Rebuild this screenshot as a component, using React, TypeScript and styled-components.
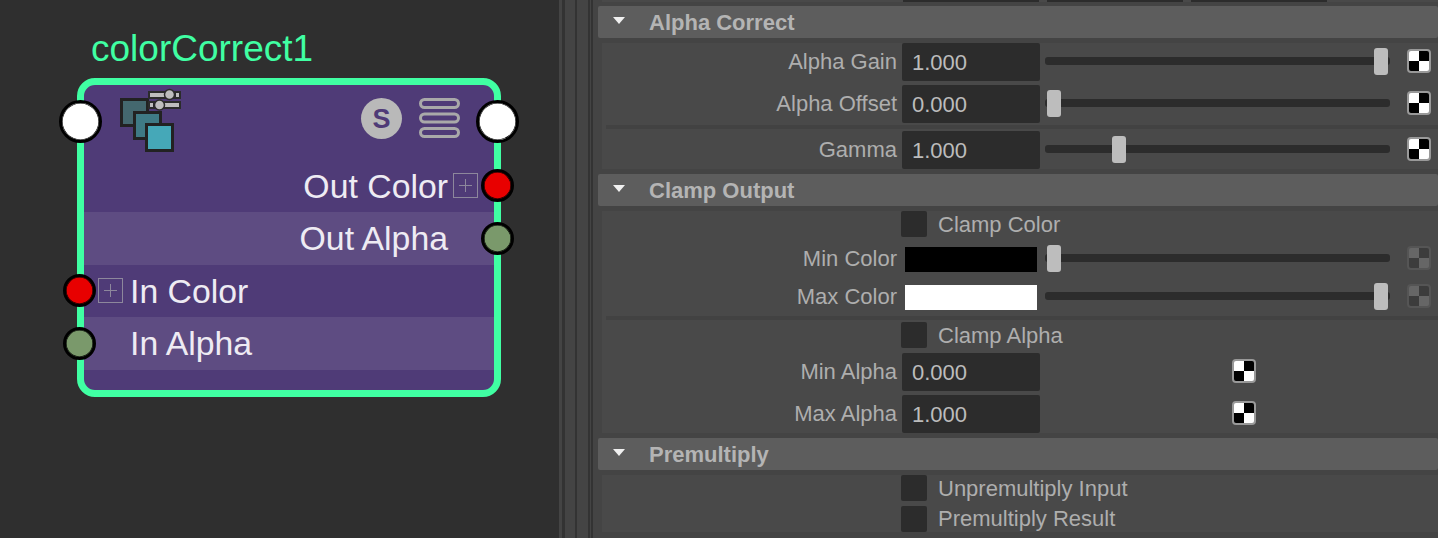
import React from 'react';
import styled, { createGlobalStyle } from 'styled-components';

const GlobalStyle = createGlobalStyle`
  html, body {
    margin: 0;
    height: 100%;
    overflow: hidden;
    background: #2f2f2f;
    font-family: "Liberation Sans", Arial, sans-serif;
  }
`;

const colors = {
  mint: '#40ffa3',
  plum: '#4f3b77',
  plumLight: '#5e4c82',
  pane: '#2f2f2f',
  panel: '#444444',
  body: '#494949',
  header: '#5d5d5d',
  field: '#2c2c2c',
  label: '#aeaeae',
};

const Screen = styled.div`
  display: flex;
  width: 1438px;
  height: 538px;
  overflow: hidden;
`;

const Canvas = styled.div`
  position: relative;
  flex: 0 0 559px;
  background: ${colors.pane};
`;

const Node = styled.div`
  position: absolute;
  left: 77px;
  top: 78px;
  width: 424px;
  height: 319px;
  box-sizing: border-box;
  border: 7px solid ${colors.mint};
  border-radius: 18px;
  background: ${colors.plum};
`;

const NodeTitle = styled.div`
  position: absolute;
  left: 7px;
  top: -57px;
  font-size: 37px;
  line-height: 42px;
  color: ${colors.mint};
  white-space: nowrap;
`;

const NodeHeader = styled.div`
  display: flex;
  justify-content: space-between;
  height: 75px;
  padding: 6px 34px 0 36px;
  box-sizing: border-box;
`;

const NodeTools = styled.div`
  display: flex;
  gap: 17px;
  margin-top: 7px;
`;

const SwatchBadge = styled.span`
  display: flex;
  align-items: center;
  justify-content: center;
  width: 41px;
  height: 41px;
  padding-top: 1px;
  box-sizing: border-box;
  border-radius: 50%;
  background: #b9b9b9;
  color: ${colors.plum};
  font-size: 27px;
  font-weight: 700;
`;

const NodeRow = styled.div<{ $alt?: boolean; $out?: boolean }>`
  position: relative;
  display: flex;
  align-items: center;
  justify-content: ${(p) => (p.$out ? 'flex-end' : 'flex-start')};
  height: ${(p) => (p.$alt ? 53 : 52)}px;
  padding: ${(p) => (p.$out ? '0 46px 0 0' : '0 0 0 46px')};
  box-sizing: border-box;
  background: ${(p) => (p.$alt ? colors.plumLight : 'transparent')};
  color: #eeebf3;
  font-size: 33.8px;
  white-space: nowrap;
`;

const PlusBox = styled.span<{ $out?: boolean }>`
  position: absolute;
  top: 13px;
  ${(p) => (p.$out ? 'right: 16px;' : 'left: 14px;')}
  width: 25px;
  height: 25px;
  box-sizing: border-box;
  border: 1px solid #8d879c;

  &::before,
  &::after {
    content: '';
    position: absolute;
    background: #8d879c;
  }
  &::before {
    left: 5px;
    right: 5px;
    top: 11px;
    height: 1px;
  }
  &::after {
    top: 5px;
    bottom: 5px;
    left: 11px;
    width: 1px;
  }
`;

const Port = styled.span<{ $x: number; $y: number; $size: number; $color: string }>`
  position: absolute;
  left: ${(p) => p.$x}px;
  top: ${(p) => p.$y}px;
  width: ${(p) => p.$size}px;
  height: ${(p) => p.$size}px;
  box-sizing: border-box;
  border: 3px solid #000;
  box-shadow: inset 0 0 0 0.6px #000;
  border-radius: 50%;
  background: ${(p) => p.$color};
`;

const Gutter = styled.div`
  display: flex;
  flex: 0 0 34px;
`;

const Strip = styled.div<{ $w: number; $dark?: boolean }>`
  flex: 0 0 ${(p) => p.$w}px;
  background: ${(p) => (p.$dark ? '#333333' : colors.panel)};
`;

const Panel = styled.div`
  flex: 1;
  padding-left: 5px;
  background: ${colors.panel};
  color: ${colors.label};
  font-size: 22px;
`;

const ClippedRow = styled.div`
  display: flex;
  gap: 8px;
  height: 2px;
  margin: 0 0 4px 4px;
  padding-left: 301px;
  background: ${colors.body};
`;

const ClippedField = styled.div`
  width: 136px;
  background: ${colors.field};
`;

const SectionHeader = styled.div`
  display: flex;
  align-items: center;
  height: 32px;
  padding-left: 15px;
  border-radius: 2px;
  background: ${colors.header};
  font-weight: 700;
  color: #b4b4b4;
`;

const SectionTitle = styled.span`
  margin-top: 2px;
`;

const Caret = styled.span`
  width: 0;
  height: 0;
  margin: -4px 24px 0 0;
  border-left: 6.5px solid transparent;
  border-right: 6.5px solid transparent;
  border-top: 7px solid #f0f0f0;
`;

const SectionBody = styled.div`
  display: flex;
  flex-direction: column;
  margin: 5px 0 5px 4px;
  background: ${colors.body};
`;

const Row = styled.div<{ $height?: number; $gap?: number }>`
  display: flex;
  align-items: center;
  height: ${(p) => p.$height ?? 38}px;
  margin-bottom: ${(p) => p.$gap ?? 0}px;
`;

const Label = styled.span`
  flex: 0 0 295px;
  margin-right: 5px;
  text-align: right;
  white-space: nowrap;
`;

const Field = styled.div`
  flex: 0 0 138px;
  height: 38px;
  margin-right: 5px;
  padding-left: 10px;
  box-sizing: border-box;
  border-radius: 2px;
  background: ${colors.field};
  color: #bcbcbc;
  line-height: 40px;
`;

const ColorWell = styled.div<{ $color: string }>`
  flex: 0 0 132px;
  height: 25px;
  margin: 0 8px 0 3px;
  background: ${(p) => p.$color};
`;

const Track = styled.div`
  position: relative;
  flex: 0 0 345px;
  height: 8px;
  margin: -2px 17px 0 0;
  border-radius: 3px;
  background: ${colors.field};
`;

const Thumb = styled.span<{ $left: number }>`
  position: absolute;
  left: ${(p) => p.$left}px;
  top: -9px;
  width: 14px;
  height: 27px;
  border-radius: 3px;
  background: #bdbdbd;
`;

const Checker = styled.span<{ $off?: boolean; $indent?: number }>`
  flex: 0 0 24px;
  height: 24px;
  margin: -2px 0 0 ${(p) => p.$indent ?? 0}px;
  box-sizing: border-box;
  border: 2px solid ${(p) => (p.$off ? '#555555' : '#999999')};
  border-radius: 4px;
  background: ${(p) =>
    p.$off
      ? 'conic-gradient(#3c3c3c 25%, #666666 0 50%, #3c3c3c 0 75%, #666666 0)'
      : 'conic-gradient(#000000 25%, #ffffff 0 50%, #000000 0 75%, #ffffff 0)'};
`;

const CheckRow = styled.div<{ $gap?: number }>`
  display: flex;
  align-items: center;
  height: 26px;
  padding-left: 299px;
  margin-bottom: ${(p) => p.$gap ?? 0}px;
`;

const CheckBox = styled.span`
  flex: 0 0 26px;
  height: 26px;
  margin-right: 11px;
  border-radius: 2px;
  background: ${colors.field};
`;

const CheckText = styled.span<{ $raised?: boolean }>`
  margin-top: ${(p) => (p.$raised ? 0 : 2)}px;
  white-space: nowrap;
`;

const Divider = styled.div<{ $above: number; $below: number }>`
  height: 4px;
  margin: ${(p) => p.$above}px 0 ${(p) => p.$below}px 4px;
  background: #424242;
`;

function NodeIcon(): React.JSX.Element {
  return (
    <svg width="62" height="62" viewBox="0 0 62 62" overflow="visible">
      <g stroke="#222222" strokeWidth="3">
        <rect x="1.5" y="8.5" width="26" height="26" fill="#44686f" />
        <rect x="14.5" y="21.5" width="26" height="26" fill="#3f7a85" />
        <rect x="26.5" y="33.5" width="26" height="26" fill="#45a8b8" />
      </g>
      <path d="M28 0h33v8H28zM28 10h33v8H28z" fill="#2b2b2b" />
      <path d="M30 2h24v4H30zM56 2h3v4h-3zM30 12h3v4h-3zM36 12h23v4H36z" fill="#bdbdbd" />
      <circle cx="49.5" cy="3.5" r="5" fill="#bdbdbd" stroke="#2b2b2b" strokeWidth="1.5" />
      <circle cx="39.5" cy="14" r="5" fill="#bdbdbd" stroke="#2b2b2b" strokeWidth="1.5" />
    </svg>
  );
}

function ListIcon(): React.JSX.Element {
  return (
    <svg width="41" height="41" viewBox="0 0 41 41" fill="none" stroke="#a9a9a9" strokeWidth="3">
      <rect x="1.5" y="1.5" width="38" height="8" rx="4" />
      <rect x="1.5" y="16" width="38" height="8" rx="4" />
      <rect x="1.5" y="30.5" width="38" height="8" rx="4" />
    </svg>
  );
}

function Section({ title, children }: { title: string; children: React.ReactNode }): React.JSX.Element {
  return (
    <>
      <SectionHeader>
        <Caret />
        <SectionTitle>{title}</SectionTitle>
      </SectionHeader>
      <SectionBody>{children}</SectionBody>
    </>
  );
}

function NumberRow({ label, value, thumb, gap }: { label: string; value: string; thumb: number; gap?: number }): React.JSX.Element {
  return (
    <Row $gap={gap}>
      <Label>{label}</Label>
      <Field>{value}</Field>
      <Track>
        <Thumb $left={thumb} />
      </Track>
      <Checker />
    </Row>
  );
}

function ColorRow({ label, color, thumb }: { label: string; color: string; thumb: number }): React.JSX.Element {
  return (
    <Row>
      <Label>{label}</Label>
      <ColorWell $color={color} />
      <Track>
        <Thumb $left={thumb} />
      </Track>
      <Checker $off />
    </Row>
  );
}

function LimitRow({ label, value, gap }: { label: string; value: string; gap?: number }): React.JSX.Element {
  return (
    <Row $gap={gap}>
      <Label>{label}</Label>
      <Field>{value}</Field>
      <Checker $indent={187} />
    </Row>
  );
}

function Toggle({ label, gap, raised }: { label: string; gap?: number; raised?: boolean }): React.JSX.Element {
  return (
    <CheckRow $gap={gap}>
      <CheckBox />
      <CheckText $raised={raised}>{label}</CheckText>
    </CheckRow>
  );
}

export default function App(): React.JSX.Element {
  return (
    <Screen>
      <GlobalStyle />
      <Canvas>
        <Node>
          <NodeTitle>colorCorrect1</NodeTitle>
          <NodeHeader>
            <NodeIcon />
            <NodeTools>
              <SwatchBadge>S</SwatchBadge>
              <ListIcon />
            </NodeTools>
          </NodeHeader>
          <NodeRow $out>
            Out Color
            <PlusBox $out />
          </NodeRow>
          <NodeRow $out $alt>
            Out Alpha
          </NodeRow>
          <NodeRow>
            <PlusBox />
            In Color
          </NodeRow>
          <NodeRow $alt>In Alpha</NodeRow>
          <Port $x={-25} $y={15} $size={43} $color="#ffffff" />
          <Port $x={392} $y={15} $size={43} $color="#ffffff" />
          <Port $x={397} $y={84} $size={33} $color="#e80000" />
          <Port $x={397} $y={137} $size={33} $color="#7a996b" />
          <Port $x={-21} $y={189} $size={33} $color="#e80000" />
          <Port $x={-21} $y={242} $size={33} $color="#7a996b" />
        </Node>
      </Canvas>
      <Gutter>
        <Strip $w={3} />
        <Strip $w={3} $dark />
        <Strip $w={10} />
        <Strip $w={2} $dark />
        <Strip $w={11} />
        <Strip $w={2} $dark />
        <Strip $w={1} />
        <Strip $w={2} $dark />
      </Gutter>
      <Panel>
        <ClippedRow>
          <ClippedField />
          <ClippedField />
          <ClippedField />
        </ClippedRow>
        <Section title="Alpha Correct">
          <NumberRow label="Alpha Gain" value="1.000" thumb={329} gap={4} />
          <NumberRow label="Alpha Offset" value="0.000" thumb={2} />
          <Divider $above={2} $below={2} />
          <NumberRow label="Gamma" value="1.000" thumb={67} />
        </Section>
        <Section title="Clamp Output">
          <Toggle label="Clamp Color" />
          <Row $height={3} />
          <ColorRow label="Min Color" color="#000000" thumb={2} />
          <ColorRow label="Max Color" color="#ffffff" thumb={329} />
          <Divider $above={0} $below={2} />
          <Toggle label="Clamp Alpha" gap={5} />
          <LimitRow label="Min Alpha" value="0.000" gap={4} />
          <LimitRow label="Max Alpha" value="1.000" />
        </Section>
        <Section title="Premultiply">
          <Toggle label="Unpremultiply Input" gap={5} />
          <Toggle label="Premultiply Result" raised />
        </Section>
      </Panel>
    </Screen>
  );
}
